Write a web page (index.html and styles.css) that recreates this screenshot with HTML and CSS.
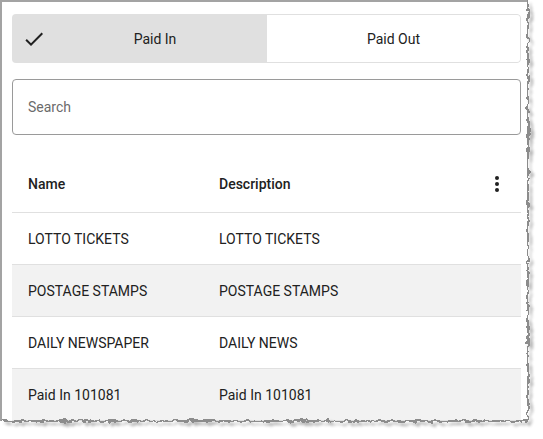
FILE: index.html
```html
<!DOCTYPE html>
<html>
<head>
<meta charset="utf-8">
<link rel="stylesheet" href="styles.css">
</head>
<body>
<div class="frame">
  <div class="toggle">
    <div class="seg seg-active">
      <svg class="check" viewBox="0 0 24 24" width="24" height="24"><path d="M9 16.17L4.83 12l-1.42 1.41L9 19 21 7l-1.41-1.41z"/></svg>
      <span class="seg-label">Paid In</span>
    </div>
    <div class="seg seg-other">
      <span class="seg-label">Paid Out</span>
    </div>
  </div>
  <input class="search" type="text" placeholder="Search">
  <div class="table">
    <div class="row head">
      <div class="cell">Name</div>
      <div class="cell">Description</div>
      <div class="cell menu">
        <svg viewBox="0 0 24 24" width="24" height="24"><circle cx="12" cy="6" r="2"/><circle cx="12" cy="12" r="2"/><circle cx="12" cy="18" r="2"/></svg>
      </div>
    </div>
    <div class="row">
      <div class="cell">LOTTO TICKETS</div>
      <div class="cell">LOTTO TICKETS</div>
      <div class="cell"></div>
    </div>
    <div class="row alt">
      <div class="cell">POSTAGE STAMPS</div>
      <div class="cell">POSTAGE STAMPS</div>
      <div class="cell"></div>
    </div>
    <div class="row">
      <div class="cell">DAILY NEWSPAPER</div>
      <div class="cell">DAILY NEWS</div>
      <div class="cell"></div>
    </div>
    <div class="row alt">
      <div class="cell">Paid In 101081</div>
      <div class="cell">Paid In 101081</div>
      <div class="cell"></div>
    </div>
  </div>
</div>
<svg class="torn" width="543" height="439" viewBox="0 0 543 439">
  <defs>
    <filter id="rip" x="-20" y="-20" width="600" height="500" filterUnits="userSpaceOnUse">
      <feTurbulence type="fractalNoise" baseFrequency="0.18" numOctaves="2" seed="4" result="n"/>
      <feDisplacementMap in="SourceGraphic" in2="n" scale="6" xChannelSelector="R" yChannelSelector="G" result="d"/>
      <feGaussianBlur in="d" stdDeviation="1.4" result="b"/>
      <feOffset in="b" dx="3" dy="3" result="o"/>
      <feComponentTransfer in="o" result="s"><feFuncA type="linear" slope="0.7"/></feComponentTransfer>
      <feMerge><feMergeNode in="s"/><feMergeNode in="d"/></feMerge>
    </filter>
  </defs>
  <path d="M528 0 L528 421 L0 421" fill="none" stroke="#8c8c8c" stroke-width="2" filter="url(#rip)"/>
</svg>
</body>
</html>
```
FILE: styles.css
```css
html, body {
  margin: 0;
  padding: 0;
  background: #ffffff;
}
body {
  width: 543px;
  height: 439px;
  overflow: hidden;
  position: relative;
  font-family: Roboto, "Liberation Sans", sans-serif;
  font-size: 14px;
  color: #212121;
}
.frame {
  box-sizing: border-box;
  width: 528px;
  height: 421px;
  border-left: 2px solid #a3a3a3;
  border-top: 2px solid #a3a3a3;
  padding: 12px 7px 0 10px;
  overflow: hidden;
  background: #ffffff;
}
.toggle {
  display: flex;
  height: 49px;
  border-radius: 4px;
  overflow: hidden;
}
.seg {
  display: flex;
  align-items: center;
  box-sizing: border-box;
}
.seg-active {
  width: 255px;
  background: #e0e0e0;
  padding-left: 10px;
  padding-right: 3px;
}
.check {
  fill: #212121;
  flex: none;
}
.seg-label {
  flex: 1;
  text-align: center;
}
.seg-other {
  flex: 1;
  border: 1px solid #e0e0e0;
  border-left: none;
  border-radius: 0 4px 4px 0;
}
.search {
  display: block;
  box-sizing: border-box;
  width: 100%;
  height: 56px;
  margin: 16px 0 0 0;
  border: 1px solid #9a9a9a;
  border-radius: 4px;
  padding: 0 0 0 15px;
  font-family: Roboto, "Liberation Sans", sans-serif;
  font-size: 14px;
  color: #212121;
  outline: none;
  background: #ffffff;
}
.search::placeholder {
  color: #6b6b6b;
  opacity: 1;
}
.table {
  margin-top: 21px;
}
.row {
  display: grid;
  grid-template-columns: 191px 1fr 48px;
  align-items: center;
  box-sizing: border-box;
  height: 52px;
  border-bottom: 1px solid #e0e0e0;
}
.row.head {
  height: 57px;
  font-weight: 500;
}
.row.alt {
  background: #f2f2f2;
}
.cell {
  padding-left: 16px;
  white-space: nowrap;
}
.cell.menu {
  padding: 0 12px 0 0;
  display: flex;
  justify-content: flex-end;
  align-items: center;
}
.cell.menu svg {
  fill: #212121;
  display: block;
}
.torn {
  position: absolute;
  left: 0;
  top: 0;
  pointer-events: none;
}
```
